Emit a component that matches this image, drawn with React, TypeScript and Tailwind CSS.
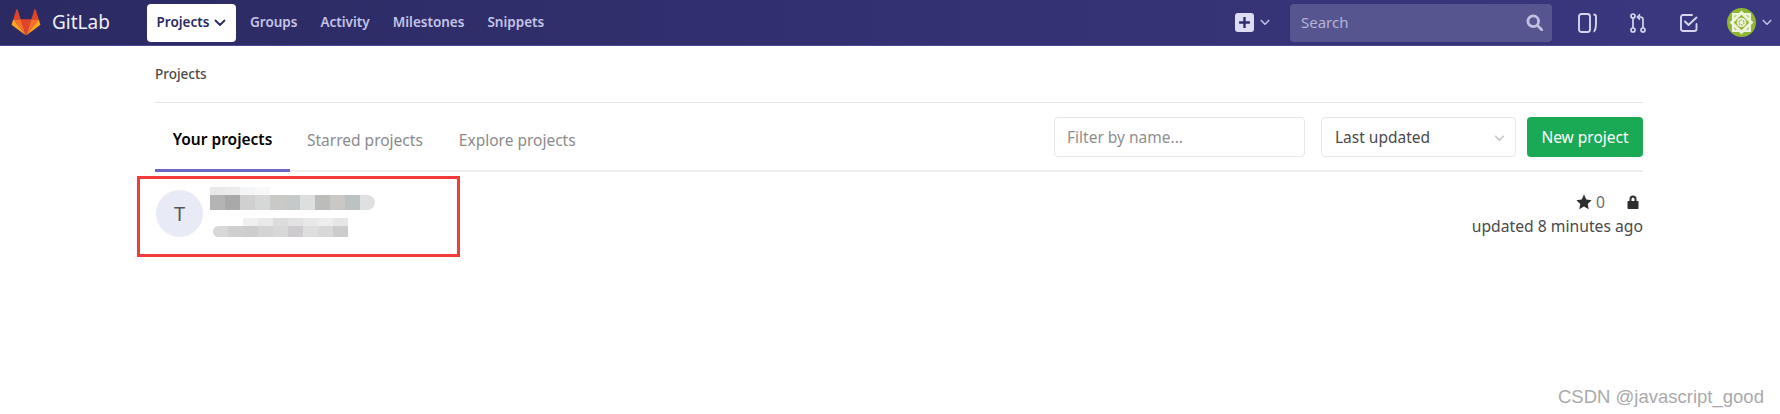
const font = { fontFamily: '"Noto Sans", "Open Sans", sans-serif' };

const nameTop = ['#e9e9e9', '#ececec', '#f4f5f6', '#f8f8f8'];
const nameBlur = ['#b4b4b4', '#a9a9a9', '#cfd0cf', '#d6d8d8', '#c9c9c5', '#c6c9c9', '#dcdfde', '#bcbcba', '#c9c8c4', '#bcc1c1', '#dfe0e2'];
const descTop = ['#f0f0f0', '#e9e9e9', '#dcdcdc', '#e2e2e2', '#e8e8e8', '#ededed', '#e6e6e6'];
const descBlur = ['#d8d8d8', '#cfcfcf', '#cdcdcd', '#d4d4d4', '#d8d8d8', '#cdcbcd', '#dedede', '#d8d8d8', '#cccccc'];

function Chevron({ className }: { className: string }) {
  return (
    <svg viewBox="0 0 12 8" className={className} fill="none" stroke="currentColor" strokeWidth="1.8" strokeLinecap="round" strokeLinejoin="round">
      <path d="M1.5 1.5 6 6l4.5-4.5" />
    </svg>
  );
}

function Logo() {
  return (
    <svg viewBox="0 0 30 28" className="h-[27px] w-[30px]">
      <path d="M15 27.5 20.5 10.5H9.5z" fill="#e24329" />
      <path d="M15 27.5 9.5 10.5H1.8z" fill="#fc6d26" />
      <path d="M1.8 10.5.2 15.6c-.2.5 0 1 .4 1.3L15 27.5z" fill="#fca326" />
      <path d="M1.8 10.5h7.7L6.2.6c-.2-.5-.9-.5-1.1 0z" fill="#e24329" />
      <path d="M15 27.5 20.5 10.5h7.7z" fill="#fc6d26" />
      <path d="M28.2 10.5l1.6 5.1c.2.5 0 1-.4 1.3L15 27.5z" fill="#fca326" />
      <path d="M28.2 10.5h-7.7L23.8.6c.2-.5.9-.5 1.1 0z" fill="#e24329" />
    </svg>
  );
}

function UserAvatar() {
  return (
    <svg viewBox="0 0 28 28" className="h-[29px] w-[29px]">
      <circle cx="14" cy="14" r="14" fill="#8fb534" />
      <path d="M14 2.500 25.500 14 14 25.500 2.500 14z" fill="#eef3dc" />
      <path d="M6 6h16v16H6z" fill="none" stroke="#eef3dc" strokeWidth="2.400" />
      <path d="M14 6.500 21.500 14 14 21.500 6.500 14z" fill="#8fb534" />
      <circle cx="14" cy="14" r="4.600" fill="#eef3dc" />
      <circle cx="14" cy="14" r="2.400" fill="none" stroke="#8fb534" strokeWidth="1.200" strokeDasharray="1.500 1" />
    </svg>
  );
}

export default function App() {
  return (
    <div className="relative h-[414px] overflow-hidden bg-white text-[#2e2e2e]" style={font}>
      {/* top bar */}
      <header className="flex h-[46px] items-center border-b border-[#4a4a94] bg-gradient-to-r from-[#2b2a63] to-[#3a387f]">
        <div className="ml-[11px] flex w-[136px] items-center">
          <Logo />
          <span className="ml-[11px] text-[19px] leading-none text-[#eeeef6]">GitLab</span>
        </div>
        <button className="flex h-[38px] w-[89px] items-center justify-center gap-[5px] rounded-[4px] bg-white text-[13.5px] font-semibold text-[#2b2a63]">
          Projects
          <Chevron className="mt-[1px] h-[8px] w-[12px]" />
        </button>
        <nav className="ml-[14px] flex gap-[23px] text-[13.5px] font-semibold text-[#c3c3e6]">
          <span>Groups</span>
          <span>Activity</span>
          <span>Milestones</span>
          <span>Snippets</span>
        </nav>
        <div className="ml-auto flex items-center">
          <span className="flex h-[19px] w-[19px] items-center justify-center rounded-[3px] bg-[#dcdcf2]">
            <svg viewBox="0 0 12 12" className="h-[13px] w-[13px]" stroke="#2f2d6c" strokeWidth="2.2">
              <path d="M6 1v10M1 6h10" />
            </svg>
          </span>
          <Chevron className="ml-[6px] h-[7px] w-[10px] text-[#c3c3e6]" />
          <div className="ml-[20px] flex h-[38px] w-[262px] items-center justify-between rounded-[4px] bg-[#57558f] pl-[11px] pr-[9px]">
            <span className="text-[15px] text-[#b4b3d8]">Search</span>
            <svg viewBox="0 0 16 16" className="h-[17px] w-[17px]" fill="none" stroke="#c2c1e0" strokeWidth="2.600" strokeLinecap="round">
              <circle cx="6.8" cy="6.8" r="5" />
              <path d="m10.8 10.8 4 4" />
            </svg>
          </div>
          <svg viewBox="0 0 19 20" className="ml-[26px] h-[20px] w-[19px]" fill="none" stroke="#d5d5ee" strokeWidth="1.900" strokeLinejoin="round">
            <rect x="1" y="1" width="11" height="18" rx="2.500" />
            <path d="M15.500 1.500c1.500 0 2.500.8 2.500 2v5c0 4-.3 7-1 8.500-.4 1-1 1.500-1.500 1.500" />
          </svg>
          <svg viewBox="0 0 16 20" className="ml-[33px] h-[20px] w-[16px]" fill="none" stroke="#d5d5ee" strokeWidth="1.700">
            <circle cx="3" cy="3" r="2" />
            <circle cx="3" cy="17" r="2" />
            <circle cx="13" cy="17" r="2" />
            <path d="M3 5v10M13 15V6.500c0-1.500-1-2.500-2.500-2.500H8" />
            <path d="M10 1.300 7.500 4 10 6.700" />
          </svg>
          <svg viewBox="0 0 18 18" className="ml-[34px] h-[18px] w-[18px]" fill="none" stroke="#d5d5ee" strokeWidth="1.900" strokeLinecap="round" strokeLinejoin="round">
            <path d="M16.500 10v5a2 2 0 0 1-2 2H3a2 2 0 0 1-2-2V3a2 2 0 0 1 2-2h9" />
            <path d="m5 7.500 3.500 3.500L16.500 3.500" />
          </svg>
          <span className="ml-[29px]">
            <UserAvatar />
          </span>
          <Chevron className="ml-[6px] mr-[8px] h-[7px] w-[10px] text-[#c3c3e6]" />
        </div>
      </header>

      <main className="ml-[155px] w-[1488px]">
        <div className="flex h-[57px] items-center border-b border-[#e5e5e5] text-[13.5px] font-medium text-[#4a4a4a]">
          Projects
        </div>

        <div className="flex h-[69px] items-center justify-between border-b-2 border-[#eeeeee]">
          <div className="flex h-full text-[15.5px]">
            <div className="-mb-[2px] flex w-[135px] items-center justify-center border-b-[3px] border-[#6b67c4] pt-[8px] font-semibold text-black">
              Your projects
            </div>
            <div className="ml-[17px] flex items-center pt-[8px] text-[#8b8b8b]">Starred projects</div>
            <div className="ml-[36px] flex items-center pt-[8px] text-[#8b8b8b]">Explore projects</div>
          </div>
          <div className="flex items-center text-[15.5px]">
            <div className="flex h-[40px] w-[251px] items-center rounded-[4px] border border-[#e8e8e8] pl-[12px] pt-[3px] text-[#8f8f8f]">
              Filter by name...
            </div>
            <div className="ml-[16px] flex h-[40px] w-[195px] items-center justify-between rounded-[4px] border border-[#e8e8e8] pl-[13px] pr-[10px] pt-[3px] text-[#4a4a4a]">
              Last updated
              <Chevron className="h-[7px] w-[11px] text-[#c4c4c4]" />
            </div>
            <button className="ml-[11px] flex h-[40px] w-[116px] items-center justify-center rounded-[4px] bg-[#1aaa55] pt-[3px] text-white">
              New project
            </button>
          </div>
        </div>

        <div className="flex items-start justify-between pt-[18px]">
          <div className="flex">
            <div className="ml-[1px] flex h-[47px] w-[47px] items-center justify-center rounded-full bg-[#e8eaf6] text-[20px] text-[#555]">
              T
            </div>
            <div className="ml-[7px] -mt-[3px]">
              {/* pixelated project name and description */}
              <div className="blur-[0.6px]">
                <div className="flex h-[8px]">
                  {nameTop.map((c, i) => (
                    <div key={i} className="h-full w-[15px]" style={{ backgroundColor: c }} />
                  ))}
                </div>
                <div className="flex h-[15px] overflow-hidden rounded-r-full">
                  {nameBlur.map((c, i) => (
                    <div key={i} className="h-full w-[15px]" style={{ backgroundColor: c }} />
                  ))}
                </div>
              </div>
              <div className="ml-[3px] mt-[8px] blur-[0.6px]">
                <div className="ml-[30px] flex h-[8px]">
                  {descTop.map((c, i) => (
                    <div key={i} className="h-full w-[15px]" style={{ backgroundColor: c }} />
                  ))}
                </div>
                <div className="flex h-[11px] overflow-hidden rounded-l-[6px]">
                  {descBlur.map((c, i) => (
                    <div key={i} className="h-full w-[15px]" style={{ backgroundColor: c }} />
                  ))}
                </div>
              </div>
            </div>
          </div>
          <div className="flex flex-col items-end text-[15.7px] leading-[24px] text-[#4a4a4a]">
            <div className="flex items-center">
              <svg viewBox="0 0 16 16" className="h-[16px] w-[16px]" fill="#2e2e2e">
                <path d="m8 .6 2.300 4.900 5.300.7-3.900 3.700 1 5.300L8 12.600l-4.700 2.600 1-5.300L.4 6.200l5.300-.7z" />
              </svg>
              <span className="ml-[4px] text-[#6b6b6b]">0</span>
              <svg viewBox="0 0 12 14" className="ml-[22px] mr-[4px] h-[14px] w-[12px]" fill="#2e2e2e">
                <path d="M2.500 6V4a3.500 3.500 0 0 1 7 0v2h1c.6 0 1 .4 1 1v6c0 .6-.4 1-1 1h-9c-.6 0-1-.4-1-1V7c0-.6.4-1 1-1zm2 0h3V4a1.500 1.500 0 0 0-3 0z" />
              </svg>
            </div>
            <div>updated 8 minutes ago</div>
          </div>
        </div>
      </main>

      {/* red annotation drawn over the screenshot */}
      <div className="absolute left-[137px] top-[176px] h-[81px] w-[323px] border-[3px] border-[#f43b3b]" />
      <div className="absolute left-[1558px] top-[383px] text-[18.5px] text-[#aaaaaa]" style={{ fontFamily: '"Liberation Sans", sans-serif' }}>
        CSDN @javascript_good
      </div>
    </div>
  );
}
